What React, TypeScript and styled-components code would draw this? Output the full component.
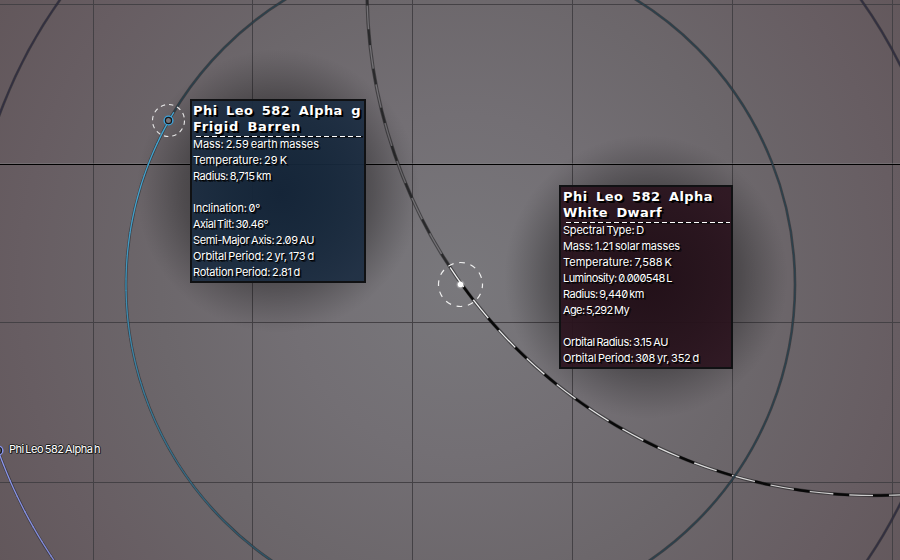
import React, { useLayoutEffect, useRef, useState } from "react";
import styled, { createGlobalStyle } from "styled-components";

const Global = createGlobalStyle`
  html, body { margin: 0; background: #6b676b; }
`;

const Viewport = styled.main`
  position: relative;
  width: 900px;
  height: 560px;
  overflow: hidden;
  color: #fff;
  background: radial-gradient(circle at 460px 285px, #79787c 0, #736f74 170px, #6c676b 300px, #675d62 440px, #62575b 540px);
`;

const Chart = styled.svg`
  position: absolute;
  inset: 0;
  display: block;
`;

const Halo = styled.div<{ $x: number; $y: number }>`
  position: absolute;
  left: ${(p) => p.$x - 142}px;
  top: ${(p) => p.$y - 142}px;
  width: 284px;
  height: 284px;
  background: radial-gradient(circle closest-side, rgba(0, 0, 0, 0.5) 0, rgba(0, 0, 0, 0.38) 52%, rgba(0, 0, 0, 0.28) 67%, rgba(0, 0, 0, 0.14) 82%, rgba(0, 0, 0, 0.04) 94%, transparent 100%);
`;

const Card = styled.section<{ $x: number; $y: number; $w: number; $pad: number; $fill: string }>`
  position: absolute;
  left: ${(p) => p.$x}px;
  top: ${(p) => p.$y}px;
  width: ${(p) => p.$w}px;
  height: 184px;
  box-sizing: border-box;
  padding: 2px 0 0 ${(p) => p.$pad}px;
  border: 2px solid #101113;
  background: ${(p) => p.$fill};
`;

const Title = styled.h2`
  height: 16px;
  margin: 0;
  font: 700 13px/16px "DejaVu Sans", sans-serif;
  word-spacing: 3.5px;
  text-shadow: 1px 1px 0 #000, 2px 2px 0 #000;
  white-space: nowrap;
`;

const Divider = styled.hr`
  height: 1px;
  margin: 1px 1px -1px 3px;
  border: 0;
  background: repeating-linear-gradient(90deg, #fff 0 5px, #0b0d10 5px 8px);
  box-shadow: 0 1px 0 rgba(0, 0, 0, 0.5);
`;

const Line = styled.div`
  height: 16px;
  font: 400 11px/16px Inter, sans-serif;
  font-feature-settings: "zero" 1;
  text-shadow: 1px 1px 0 #000, 2px 2px 0 rgba(0, 0, 0, 0.6);
  white-space: nowrap;
  word-spacing: -1px;
`;

const Tag = styled.div`
  position: absolute;
  left: 9px;
  top: 441px;
  font: 400 11px/17px Inter, sans-serif;
  text-shadow: 1px 0 0 #222, -1px 0 0 #222, 0 1px 0 #222, 0 -1px 0 #222, 1px 1px 0 #222;
  white-space: nowrap;
  word-spacing: -1px;
`;

const Run = styled.span`
  display: inline-block;
`;

function Fit({ text, width }: { text: string; width: number }) {
  const ref = useRef<HTMLSpanElement>(null);
  const [spacing, setSpacing] = useState(0);
  useLayoutEffect(() => {
    const natural = ref.current!.getBoundingClientRect().width;
    setSpacing((width - natural) / text.length);
  }, [text, width]);
  return <Run ref={ref} style={{ letterSpacing: spacing }}>{text}</Run>;
}

type Row = [string, number] | null;
type Body = { x: number; y: number; w: number; pad: number; fill: string; titles: [string, number][]; rows: Row[] };

const bodies: Body[] = [
  {
    x: 190, y: 99, w: 176, pad: 1,
    fill: "radial-gradient(circle at 88px 92px, rgba(19, 36, 56, .95) 0, rgba(22, 40, 60, .93) 50px, rgba(29, 46, 67, .92) 110px)",
    titles: [["Phi Leo 582 Alpha g", 168], ["Frigid Barren", 108]],
    rows: [
      ["Mass: 2.59 earth masses", 126], ["Temperature: 29 K", 94], ["Radius: 8,715 km", 78], null,
      ["Inclination: 0°", 67], ["Axial Tilt: 30.46°", 75], ["Semi-Major Axis: 2.09 AU", 121],
      ["Orbital Period: 2 yr, 173 d", 121], ["Rotation Period: 2.81 d", 107],
    ],
  },
  {
    x: 559, y: 185, w: 174, pad: 2,
    fill: "radial-gradient(circle at 87px 92px, rgba(33, 14, 23, .95) 0, rgba(37, 17, 26, .93) 50px, rgba(44, 20, 31, .92) 110px)",
    titles: [["Phi Leo 582 Alpha", 150], ["White Dwarf", 99]],
    rows: [
      ["Spectral Type: D", 81], ["Mass: 1.21 solar masses", 117], ["Temperature: 7,588 K", 109],
      ["Luminosity: 0.000548 L", 109], ["Radius: 9,440 km", 81], ["Age: 5,292 My", 66], null,
      ["Orbital Radius: 3.15 AU", 105], ["Orbital Period: 308 yr, 352 d", 136],
    ],
  },
];

const CX = 460.5;
const CY = 284.5;

const arc = (cx: number, cy: number, r: number, from: number, to: number) => {
  const at = (deg: number) => {
    const t = (deg * Math.PI) / 180;
    return `${(cx + r * Math.cos(t)).toFixed(2)} ${(cy + r * Math.sin(t)).toFixed(2)}`;
  };
  return `M${at(from)}A${r} ${r} 0 0 ${to > from ? 1 : 0} ${at(to)}`;
};

const mix = (a: number[], b: number[], t: number) => {
  const k = Math.max(0, Math.min(1, t));
  return `rgb(${a.map((v, i) => Math.round(v + (b[i] - v) * k)).join(",")})`;
};

function Trail({ r, start, bright, dark }: { r: number; start: number; bright: number[]; dark: number[] }) {
  const steps = 50;
  return (
    <g fill="none">
      <circle cx={CX} cy={CY} r={r} stroke="#26282c" strokeOpacity=".6" strokeWidth="2.7" />
      <circle cx={CX} cy={CY} r={r} stroke={mix(dark, dark, 0)} strokeWidth="1.3" />
      {Array.from({ length: steps }, (_, i) => (
        <path key={i} d={arc(CX, CY, r, start - i * 2, start - i * 2 - 2.1)} stroke={mix(bright, dark, i / steps)} strokeWidth="1.3" />
      ))}
    </g>
  );
}

function StarOrbit() {
  const step = 360 / 80;
  const cx = 873;
  const cy = -10.5;
  const r = 506;
  return (
    <g fill="none">
      <circle cx={cx} cy={cy} r={r} stroke="#242426" strokeOpacity=".6" strokeWidth="3.4" />
      {Array.from({ length: 24 }, (_, i) => {
        const a = 90 + (i - 1) * step;
        const past = a > 144;
        const dim = a >= 144;
        const light = past ? "#747276" : mix([205, 205, 205], [245, 245, 245], (a - 90) / 50);
        return (
          <g key={i}>
            <path d={arc(cx, cy, r, a, a + step * 0.6)} stroke={light} strokeWidth="1.2" />
            <path d={arc(cx, cy, r, a + step * 0.6, a + step)} stroke={dim ? "#29292b" : "#080808"} strokeWidth={dim ? 2 : 2.4} />
          </g>
        );
      })}
    </g>
  );
}

export default function App() {
  return (
    <>
      <Global />
      <Viewport>
        <Chart width="900" height="560" viewBox="0 0 900 560">
          <g fill="#444145" shapeRendering="crispEdges">
            {[93, 252, 412, 572, 732, 892].map((x) => <rect key={x} x={x} y="0" width="1" height="560" />)}
            {[4, 322, 482].map((y) => <rect key={y} x="0" y={y} width="900" height="1" />)}
          </g>
          <rect y="163" width="900" height="1" fill="#88868a" opacity=".4" />
          <rect y="164" width="900" height="1" fill="#000" />
          <Trail r={491.3} start={160.5} bright={[142, 152, 235]} dark={[50, 47, 66]} />
          <StarOrbit />
          <Trail r={334.5} start={211} bright={[75, 180, 228]} dark={[43, 65, 77]} />
        </Chart>
        {bodies.map((b) => (
          <React.Fragment key={b.x}>
            <Halo $x={b.x + b.w / 2} $y={b.y + 92} />
            <Card $x={b.x} $y={b.y} $w={b.w} $pad={b.pad} $fill={b.fill}>
              {b.titles.map(([t, w]) => <Title key={t}><Fit text={t} width={w} /></Title>)}
              <Divider />
              {b.rows.map((row, i) => <Line key={i}>{row && <Fit text={row[0]} width={row[1]} />}</Line>)}
            </Card>
          </React.Fragment>
        ))}
        <Chart width="900" height="560" viewBox="0 0 900 560">
          <circle cx="168.5" cy="120.5" r="16" fill="none" stroke="#e6e6e6" strokeWidth="1.1" strokeDasharray="4.4 3.98" />
          <circle cx="168.5" cy="120.5" r="4.3" fill="none" stroke="#39a4df" strokeWidth="1.5" />
          <circle cx="168.5" cy="120.5" r="3.1" fill="#777579" stroke="#151719" strokeWidth="1.2" />
          <circle cx="460.5" cy="284.5" r="22" fill="none" stroke="#eee" strokeWidth="1.2" strokeDasharray="5.8 5.72" strokeDashoffset="2" />
          <circle cx="460.5" cy="284.5" r="4" fill="#fff" opacity=".25" />
          <circle cx="460.5" cy="284.5" r="2.8" fill="#fff" />
          <circle cx="-1.5" cy="450.5" r="4.3" fill="#57525a" stroke="#8493ef" strokeWidth="1.5" />
          <circle cx="-1.5" cy="450.5" r="3.1" fill="none" stroke="#151719" strokeWidth="1.1" />
        </Chart>
        <Tag><Fit text="Phi Leo 582 Alpha h" width={91} /></Tag>
      </Viewport>
    </>
  );
}
